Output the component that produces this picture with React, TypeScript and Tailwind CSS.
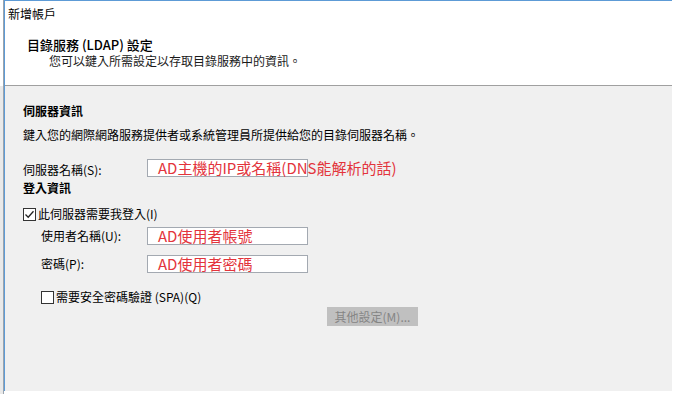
import React from 'react';

const font = { fontFamily: '"Noto Sans CJK TC", "Noto Sans", sans-serif' };

function CheckBox({ checked }: { checked?: boolean }) {
  return (
    <div className="w-[13px] h-[13px] border border-[#333333] bg-white flex items-center justify-center shrink-0">
      {checked && (
        <svg width="11" height="11" viewBox="0 0 11 11">
          <path d="M1.5 5.5 L4.2 8.2 L9.5 2.2" fill="none" stroke="#222" strokeWidth="1.3" />
        </svg>
      )}
    </div>
  );
}

function TextBox({ value }: { value: string }) {
  return (
    <div className="relative w-[161px] h-[18px] border border-[#a3a9b1] bg-white shrink-0">
      <span className="absolute left-[10px] top-[-3px] whitespace-nowrap text-[15px] leading-[22px] text-[#e3343c]">
        {value}
      </span>
    </div>
  );
}

export default function App() {
  return (
    <div className="w-[675px] h-[394px] bg-white flex overflow-hidden text-black" style={font}>
      {/* window behind */}
      <div className="w-[4px] flex flex-col border-r border-[#9aa3ad]">
        <div className="h-[86px] bg-white" />
        <div className="flex-1 bg-[#e9e9e9]" />
      </div>

      <div className="w-[668px] h-[391px] flex flex-col border-l border-t border-[#5d9bd6]">
        {/* header */}
        <div className="h-[85px] bg-white border-b border-[#a0a0a0] shrink-0">
          <div className="pl-[3px] mt-[4px] h-[18px] text-[12px] leading-[18px]">新增帳戶</div>
          <div className="pl-[22px] mt-[14px] h-[16px] text-[13px] leading-[16px] font-medium">目錄服務 (LDAP) 設定</div>
          <div className="pl-[44px] h-[16px] text-[12px] leading-[16px] text-[#1a1a1a]">您可以鍵入所需設定以存取目錄服務中的資訊。</div>
        </div>

        {/* body */}
        <div className="flex-1 bg-[#f0f0f0] pl-[18px] pt-[17px] text-[12px]">
          <div className="h-[16px] leading-[16px] font-bold">伺服器資訊</div>
          <div className="mt-[8px] h-[16px] leading-[16px]">鍵入您的網際網路服務提供者或系統管理員所提供給您的目錄伺服器名稱。</div>

          <div className="mt-[16px] h-[18px] flex items-center">
            <div className="w-[124px] pt-[3px] leading-[16px]">伺服器名稱(S):</div>
            <TextBox value="AD主機的IP或名稱(DNS能解析的話)" />
          </div>

          <div className="mt-[3px] h-[16px] leading-[16px] font-bold">登入資訊</div>

          <div className="mt-[10px] h-[16px] flex items-center gap-[2px]">
            <CheckBox checked />
            <span className="leading-[16px]">此伺服器需要我登入(I)</span>
          </div>

          <div className="mt-[5px] h-[18px] flex items-center pl-[18px]">
            <div className="w-[106px] leading-[16px]">使用者名稱(U):</div>
            <TextBox value="AD使用者帳號" />
          </div>

          <div className="mt-[10px] h-[18px] flex items-center pl-[18px]">
            <div className="w-[106px] leading-[16px]">密碼(P):</div>
            <TextBox value="AD使用者密碼" />
          </div>

          <div className="mt-[16px] h-[16px] flex items-center gap-[2px] pl-[18px]">
            <CheckBox />
            <span className="leading-[16px]">需要安全密碼驗證 (SPA)(Q)</span>
          </div>

          <div className="mt-[2px] ml-[304px] w-[91px] h-[19px] bg-[#c0c0c0] text-[#858585] flex items-center justify-center leading-[16px]">
            其他設定(M)...
          </div>
        </div>
      </div>
      <div className="flex-1 bg-white" />
    </div>
  );
}
